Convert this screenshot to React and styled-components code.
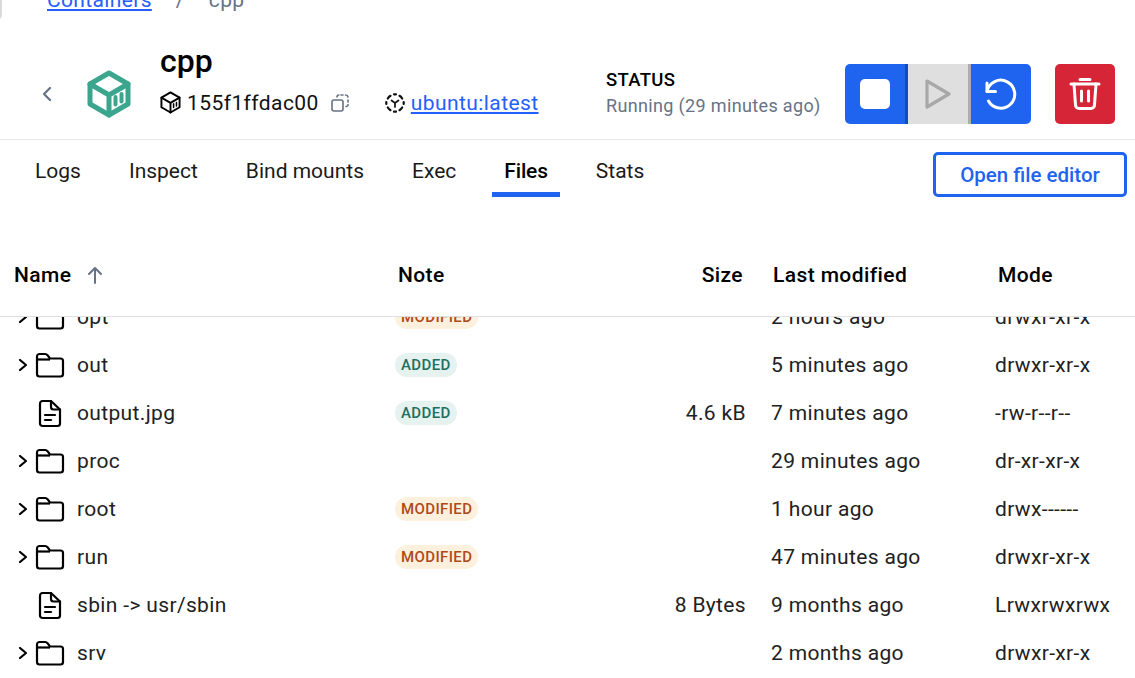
import React from 'react'
import styled, { createGlobalStyle } from 'styled-components'

const GlobalStyle = createGlobalStyle`
   html, body {
      margin:0;
      padding:0;
      background:#fff;
   }
   body {
      font-family:Roboto, "Liberation Sans", sans-serif;
      color:#000;
   }
`

const Page = styled.div`
   position:relative;
   width:1135px;
   height:678px;
   overflow:hidden;
   background:#fff;
`

const Corner = styled.div`
   position:absolute;
   left:-14px;
   top:-8px;
   width:16px;
   height:30px;
   border-radius:0 0 8px 0;
   background:#d9d9de;
`

const Crumbs = styled.div`
   height:13px;
   padding-left:47px;
   display:flex;
   align-items:flex-end;
   gap:24px;
   overflow:hidden;
   font-size:21px;
   line-height:26px;
   letter-spacing:.35px;
   color:#677285;
`

const CrumbLink = styled.a`
   color:#2560ff;
   text-decoration:underline;
`

const Header = styled.div`
   height:127px;
   padding-top:36px;
   border-bottom:1px solid #e8e8e8;
   display:flex;
   align-items:center;
   box-sizing:border-box;
`

const BackIcon = styled.svg`
   width:24px;
   height:24px;
   margin-left:35px;
   color:#677285;
`

const Logo = styled.svg`
   width:${p => p.$size}px;
   height:${p => p.$size * 48 / 44}px;
   color:${p => p.$color};
   display:block;
   flex:none;
`

const LogoSlot = styled.div`
   margin-left:28px;
`

const Identity = styled.div`
   margin-left:29px;
   margin-top:-32px;
   width:446px;
`

const Title = styled.h1`
   margin:0 0 5px;
   font-size:32px;
   line-height:44px;
   font-weight:500;
`

const IdRow = styled.div`
   display:flex;
   align-items:center;
   height:30px;
   font-size:21px;
   letter-spacing:.42px;
   color:#111;
`

const IdText = styled.span`
   margin-left:6px;
`

const IconSvg = styled.svg`
   display:block;
   flex:none;
`

const ImageLink = styled.a`
   margin-left:6px;
   color:#2560ff;
   text-decoration:underline;
`

const Status = styled.div`
   width:239px;
   margin-top:-2px;
`

const StatusLabel = styled.div`
   font-size:18.5px;
   line-height:26px;
   font-weight:500;
   letter-spacing:.3px;
`

const StatusText = styled.div`
   font-size:18px;
   line-height:26px;
   letter-spacing:.35px;
   color:#677285;
`

const ActionGroup = styled.div`
   display:flex;
   border-radius:5px;
   overflow:hidden;
   margin-right:24px;
`

const ActionButton = styled.button`
   width:${p => p.$wide ? 63 : 60}px;
   height:60px;
   padding:0;
   border:0;
   display:flex;
   align-items:center;
   justify-content:center;
   box-sizing:border-box;
   background:${p => p.$bg};
   border-right:${p => p.$sep ? `3px solid ${p.$sep}` : '0'};
`

const DeleteButton = styled(ActionButton)`
   border-radius:5px;
`

const TabBar = styled.div`
   height:57px;
   padding:0 8px 0 23px;
   display:flex;
   justify-content:space-between;
   align-items:flex-end;
`

const Tabs = styled.div`
   display:flex;
   gap:24px;
`

const Tab = styled.div`
   height:52px;
   padding:0 12px;
   box-sizing:border-box;
   font-size:21px;
   line-height:52px;
   letter-spacing:${p => p.$active ? '-.15px' : '0'};
   font-weight:${p => p.$active ? 500 : 400};
   color:${p => p.$active ? '#000' : '#1a1a1a'};
   border-bottom:5px solid ${p => p.$active ? '#1f64ef' : 'transparent'};
`

const OpenButton = styled.button`
   width:194px;
   height:45px;
   border:3px solid #1f64ef;
   border-radius:5px;
   background:#fff;
   color:#1f64ef;
   font-family:inherit;
   font-size:20.5px;
   font-weight:500;
   padding:0;
`

const HeadRow = styled.div`
   height:120px;
   box-sizing:border-box;
   border-bottom:1px solid #e0e0e0;
   display:grid;
   grid-template-columns:398px 245px 100px 255px 1fr;
   align-items:center;
   padding-top:37px;
   font-size:21px;
   font-weight:500;
   letter-spacing:.4px;
`

const NameHead = styled.div`
   padding-left:14px;
   display:flex;
   align-items:center;
   gap:12px;
`

const SizeHead = styled.div`
   text-align:right;
`

const ModifiedHead = styled.div`
   padding-left:30px;
`

const ListClip = styled.div`
   height:361px;
   overflow:hidden;
`

const List = styled.div`
   margin-top:-24px;
`

const Row = styled.div`
   height:48px;
   display:grid;
   grid-template-columns:395px 251px 100px 249px 1fr;
   align-items:center;
   font-size:21px;
   letter-spacing:.35px;
   color:#212121;
`

const NameCell = styled.div`
   display:flex;
   align-items:center;
   padding-left:14px;
`

const Chevron = styled(IconSvg)`
   visibility:${p => p.$hidden ? 'hidden' : 'visible'};
`

const FileName = styled.span`
   margin-left:12px;
`

const SizeCell = styled.div`
   text-align:right;
`

const ModifiedCell = styled.div`
   padding-left:25px;
`

const Badge = styled.span`
   display:block;
   width:fit-content;
   height:24px;
   line-height:24px;
   padding:0 6px;
   border-radius:12px;
   font-size:15px;
   font-weight:500;
   letter-spacing:.38px;
   background:${p => p.$kind === 'added' ? '#e5f2f0' : '#fdf1dd'};
   color:${p => p.$kind === 'added' ? '#226f5f' : '#b04a18'};
`

const CubeIcon = ({ size, color, weight }) => (
   <Logo $size={size} $color={color} viewBox="0 0 44 48" fill="none" stroke="currentColor" strokeWidth={weight} strokeLinejoin="round" strokeLinecap="round">
      <path d="M22 3 41 14v20L22 45 3 34V14Z" />
      <path d="M3 14l19 11 19-11M22 25v20" />
      <path d="M28.500 27v7.500M34.500 24v7.500" strokeWidth={weight * .8} />
   </Logo>
)

const CopyIcon = () => (
   <IconSvg width="18" height="18" viewBox="0 0 18 18" fill="none" stroke="#677285" strokeWidth="1.600" strokeLinecap="round" strokeLinejoin="round" style={{ marginLeft: 12 }}>
      <rect x="1" y="6" width="11" height="11" rx="2" />
      <path d="M6 3V2.800A1.800 1.800 0 0 1 7.800 1M10 1h2M14.500 1A2.500 2.500 0 0 1 17 3M17 6v2M17 10.500A1.800 1.800 0 0 1 15 12.500" />
   </IconSvg>
)

const ImageIcon = () => (
   <IconSvg width="20" height="20" viewBox="0 0 20 20" fill="none" stroke="#111" strokeWidth="2.200" strokeLinecap="round" style={{ marginLeft: 36 }}>
      <path d="M5.500 2.800a8.500 8.500 0 0 0-2.700 2.700M14.500 2.800a8.500 8.500 0 0 1 2.700 2.700M17.200 14.500a8.500 8.500 0 0 1-2.700 2.700M5.500 17.200a8.500 8.500 0 0 1-2.700-2.700" />
      <path d="M9 1.300h2M9 18.700h2M1.300 9v2M18.700 9v2" />
      <path d="M6.500 7.500 10 10l3.500-2.500M10 10v4" strokeWidth="1.700" />
   </IconSvg>
)

const ChevronIcon = ({ hidden }) => (
   <Chevron $hidden={hidden} width="16" height="20" viewBox="0 0 16 20" fill="none" stroke="#000" strokeWidth="2.200" strokeLinecap="round" strokeLinejoin="round">
      <path d="M6 5l6 5-6 5" />
   </Chevron>
)

const FolderIcon = () => (
   <IconSvg width="30" height="26" viewBox="0 0 30 26" fill="none" stroke="#000" strokeWidth="2.200" strokeLinejoin="round" style={{ marginLeft: 5 }}>
      <path d="M2 4.500A2.500 2.500 0 0 1 4.500 2h5.800c1 0 1.500.4 2.200 1.200L15 6.500h10.500A2.500 2.500 0 0 1 28 9v13a2.500 2.500 0 0 1-2.500 2.500h-21A2.500 2.500 0 0 1 2 22Z" />
      <path d="M2 7.500h13" />
   </IconSvg>
)

const FileIcon = () => (
   <IconSvg width="30" height="30" viewBox="0 0 30 30" fill="none" stroke="#000" strokeWidth="2.200" strokeLinejoin="round" strokeLinecap="round" style={{ marginLeft: 5 }}>
      <path d="M5 5.500A2.500 2.500 0 0 1 7.500 3H16l9 8.500v14A2.500 2.500 0 0 1 22.500 28h-15A2.500 2.500 0 0 1 5 25.500Z" />
      <path d="M16 3v6a2.500 2.500 0 0 0 2.500 2.500H25" />
      <path d="M10 17h10M10 22h6" />
   </IconSvg>
)

const rows = [
   { name: 'opt', folder: true, badge: 'modified', modified: '2 hours ago', mode: 'drwxr-xr-x' },
   { name: 'out', folder: true, badge: 'added', modified: '5 minutes ago', mode: 'drwxr-xr-x' },
   { name: 'output.jpg', badge: 'added', size: '4.6 kB', modified: '7 minutes ago', mode: '-rw-r--r--' },
   { name: 'proc', folder: true, modified: '29 minutes ago', mode: 'dr-xr-xr-x' },
   { name: 'root', folder: true, badge: 'modified', modified: '1 hour ago', mode: 'drwx------' },
   { name: 'run', folder: true, badge: 'modified', modified: '47 minutes ago', mode: 'drwxr-xr-x' },
   { name: 'sbin -> usr/sbin', size: '8 Bytes', modified: '9 months ago', mode: 'Lrwxrwxrwx' },
   { name: 'srv', folder: true, modified: '2 months ago', mode: 'drwxr-xr-x' },
]

const tabs = ['Logs', 'Inspect', 'Bind mounts', 'Exec', 'Files', 'Stats']

const App = () => (
   <Page>
      <GlobalStyle />
      <Corner />
      <Crumbs>
         <CrumbLink>Containers</CrumbLink>
         <span>/</span>
         <span>cpp</span>
      </Crumbs>
      <Header>
         <BackIcon viewBox="0 0 24 24" fill="none" stroke="currentColor" strokeWidth="2.200" strokeLinecap="round" strokeLinejoin="round">
            <path d="M15 6l-6 6 6 6" />
         </BackIcon>
         <LogoSlot><CubeIcon size={44} color="#3ba58e" weight={5} /></LogoSlot>
         <Identity>
            <Title>cpp</Title>
            <IdRow>
               <CubeIcon size={21} color="#000" weight={4} />
               <IdText>155f1ffdac00</IdText>
               <CopyIcon />
               <ImageIcon />
               <ImageLink>ubuntu:latest</ImageLink>
            </IdRow>
         </Identity>
         <Status>
            <StatusLabel>STATUS</StatusLabel>
            <StatusText>Running (29 minutes ago)</StatusText>
         </Status>
         <ActionGroup>
            <ActionButton $wide $bg="#1f64ef" $sep="#0f4cbd" aria-label="Stop">
               <IconSvg width="30" height="30" viewBox="0 0 30 30"><rect width="30" height="30" rx="5" fill="#fff" /></IconSvg>
            </ActionButton>
            <ActionButton $wide $bg="#dfdfdf" $sep="#adadad" aria-label="Start">
               <IconSvg width="26" height="32" viewBox="0 0 26 32" fill="none" stroke="#a8a8a8" strokeWidth="3.200" strokeLinejoin="round"><path d="M2 3l22 13L2 29Z" /></IconSvg>
            </ActionButton>
            <ActionButton $bg="#1f64ef" aria-label="Restart">
               <IconSvg width="34" height="34" viewBox="0 0 34 34" fill="none" stroke="#fff" strokeWidth="3" strokeLinecap="round" strokeLinejoin="round">
                  <path d="M3 6v8.500h8.500" />
                  <path d="M3 14.500A14 14 0 1 1 4.500 24" />
               </IconSvg>
            </ActionButton>
         </ActionGroup>
         <DeleteButton $bg="#d52536" aria-label="Delete">
            <IconSvg width="32" height="34" viewBox="0 0 32 34" fill="none" stroke="#fff" strokeWidth="3" strokeLinecap="round" strokeLinejoin="round">
               <path d="M2 7h28M11 2.500h10" />
               <path d="M5 7l1.500 21a3.500 3.500 0 0 0 3.500 3.500h12a3.500 3.500 0 0 0 3.500-3.500L27 7" />
               <path d="M12.500 14v10M19.500 14v10" />
            </IconSvg>
         </DeleteButton>
      </Header>
      <TabBar>
         <Tabs>
            {tabs.map(t => <Tab key={t} $active={t === 'Files'}>{t}</Tab>)}
         </Tabs>
         <OpenButton>Open file editor</OpenButton>
      </TabBar>
      <HeadRow>
         <NameHead>
            Name
            <IconSvg width="24" height="24" viewBox="0 0 24 24" fill="none" stroke="#677285" strokeWidth="2" strokeLinecap="round" strokeLinejoin="round">
               <path d="M12 20V5M6 11l6-6 6 6" />
            </IconSvg>
         </NameHead>
         <div>Note</div>
         <SizeHead>Size</SizeHead>
         <ModifiedHead>Last modified</ModifiedHead>
         <div>Mode</div>
      </HeadRow>
      <ListClip>
         <List>
            {rows.map(r => (
               <Row key={r.name}>
                  <NameCell>
                     <ChevronIcon hidden={!r.folder} />
                     {r.folder ? <FolderIcon /> : <FileIcon />}
                     <FileName>{r.name}</FileName>
                  </NameCell>
                  <div>{r.badge && <Badge $kind={r.badge}>{r.badge.toUpperCase()}</Badge>}</div>
                  <SizeCell>{r.size}</SizeCell>
                  <ModifiedCell>{r.modified}</ModifiedCell>
                  <div>{r.mode}</div>
               </Row>
            ))}
         </List>
      </ListClip>
   </Page>
)

export default App
